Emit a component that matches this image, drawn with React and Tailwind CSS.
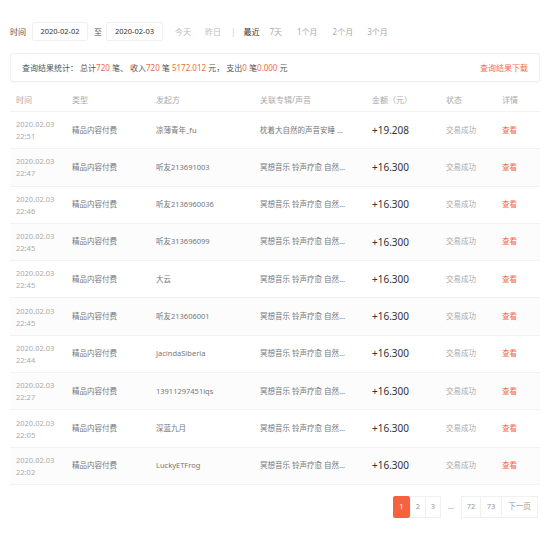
import React from "react";

const rows = [
  { date: "2020.02.03", time: "22:51", from: "凉薄青年_fu", album: "枕着大自然的声音安睡 ...", amount: "+19.208" },
  { date: "2020.02.03", time: "22:47", from: "听友213691003", album: "冥想音乐 铃声疗愈 自然...", amount: "+16.300" },
  { date: "2020.02.03", time: "22:46", from: "听友2136960036", album: "冥想音乐 铃声疗愈 自然...", amount: "+16.300" },
  { date: "2020.02.03", time: "22:45", from: "听友313696099", album: "冥想音乐 铃声疗愈 自然...", amount: "+16.300" },
  { date: "2020.02.03", time: "22:45", from: "大云", album: "冥想音乐 铃声疗愈 自然...", amount: "+16.300" },
  { date: "2020.02.03", time: "22:45", from: "听友213606001", album: "冥想音乐 铃声疗愈 自然...", amount: "+16.300" },
  { date: "2020.02.03", time: "22:44", from: "JacindaSiberia", album: "冥想音乐 铃声疗愈 自然...", amount: "+16.300" },
  { date: "2020.02.03", time: "22:27", from: "13911297451iqs", album: "冥想音乐 铃声疗愈 自然...", amount: "+16.300" },
  { date: "2020.02.03", time: "22:05", from: "深蓝九月", album: "冥想音乐 铃声疗愈 自然...", amount: "+16.300" },
  { date: "2020.02.03", time: "22:02", from: "LuckyETFrog", album: "冥想音乐 铃声疗愈 自然...", amount: "+16.300" },
];

const cols = "grid grid-cols-[56px_84px_104px_112px_74px_56px_1fr] items-center pl-[6px]";

const App = () => {
  return (
    <div className="w-[556px] h-[534px] bg-white text-[#666] font-['Noto_Sans','Noto_Sans_CJK_SC',sans-serif]">
      <div className="w-[530px] ml-[10px] pt-[22px]">
        {/* Filter row */}
        <div className="flex items-center h-[19px] text-[8px]">
          <span className="text-[#555] w-[22px]">时间</span>
          <div className="w-[56px] h-[19px] border border-[#f0f0f0] rounded-[2px] flex items-center justify-center text-[#333] text-[7.5px]">
            2020-02-02
          </div>
          <span className="text-[#555] ml-[6px] mr-[4px]">至</span>
          <div className="w-[57px] h-[19px] border border-[#f0f0f0] rounded-[2px] flex items-center justify-center text-[#333] text-[7.5px]">
            2020-02-03
          </div>
          <span className="text-[#bbb] ml-[12px]">今天</span>
          <span className="text-[#bbb] ml-[14px]">昨日</span>
          <span className="text-[#ccc] ml-[10px]">|</span>
          <span className="text-[#333] ml-[8px]">最近</span>
          <span className="text-[#aaa] ml-[10px]">7天</span>
          <span className="text-[#aaa] ml-[15px]">1个月</span>
          <span className="text-[#aaa] ml-[15px]">2个月</span>
          <span className="text-[#aaa] ml-[14px]">3个月</span>
        </div>

        {/* Summary */}
        <div className="mt-[12px] h-[29px] border border-[#f0f0f0] rounded-[3px] shadow-[0_1px_3px_rgba(0,0,0,0.04)] flex items-center justify-between px-[11px] text-[8px]">
          <div className="text-[#555]">
            查询结果统计：&nbsp;总计<span className="text-[#f26b4a]">720</span> 笔、&nbsp;收入
            <span className="text-[#f26b4a]">720</span> 笔 <span className="text-[#f26b4a]">5172.012</span> 元，&nbsp;支出
            <span className="text-[#f26b4a]">0</span> 笔<span className="text-[#f26b4a]">0.000</span> 元
          </div>
          <span className="text-[#f26b4a]">查询结果下载</span>
        </div>

        {/* Table header */}
        <div className={`${cols} h-[30px] pt-[6px] text-[8px] text-[#aaa] border-b border-[#f2f2f2]`}>
          <span>时间</span>
          <span>类型</span>
          <span>发起方</span>
          <span>关联专辑/声音</span>
          <span>金额（元）</span>
          <span>状态</span>
          <span>详情</span>
        </div>

        {/* Rows */}
        {rows.map((r, i) => (
          <div
            key={i}
            className={`${cols} h-[37.3px] border-b border-[#f2f2f2] ${i % 2 === 1 ? "bg-[#fcfcfc]" : "bg-white"}`}
          >
            <div className="text-[7.5px] leading-[12px] text-[#aaa]">
              <div>{r.date}</div>
              <div>{r.time}</div>
            </div>
            <span className="text-[7.5px] text-[#777]">精品内容付费</span>
            <span className="text-[7.5px] text-[#777]">{r.from}</span>
            <span className="text-[7.5px] text-[#777]">{r.album}</span>
            <span className="text-[10px] text-[#333]">{r.amount}</span>
            <span className="text-[7.5px] text-[#aaa]">交易成功</span>
            <span className="text-[7.5px] text-[#f26b4a]">查看</span>
          </div>
        ))}

        {/* Pagination */}
        <div className="flex justify-end mt-[11px] pr-[2px] text-[7.5px] text-[#999]">
          <div className="flex items-center h-[22px]">
            <span className="w-[17px] h-[22px] rounded-[2px] bg-[#f4623f] text-white flex items-center justify-center">1</span>
            <span className="w-[16px] h-[22px] border border-[#f0f0f0] flex items-center justify-center">2</span>
            <span className="w-[15px] h-[22px] border border-l-0 border-[#f0f0f0] flex items-center justify-center">3</span>
            <span className="w-[20px] h-[22px] flex items-center justify-center">...</span>
            <span className="w-[20px] h-[22px] border border-[#f0f0f0] flex items-center justify-center">72</span>
            <span className="w-[21px] h-[22px] border border-l-0 border-[#f0f0f0] flex items-center justify-center">73</span>
            <span className="w-[36px] h-[22px] border border-l-0 border-[#f0f0f0] flex items-center justify-center">下一页</span>
          </div>
        </div>
      </div>
    </div>
  );
};

export default App;
